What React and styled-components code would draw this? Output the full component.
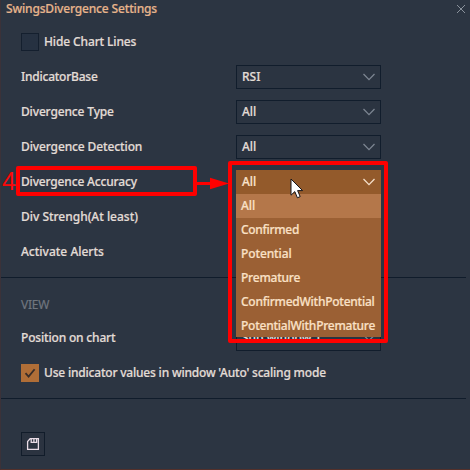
import React from "react";
import styled, { createGlobalStyle } from "styled-components";

const GlobalStyle = createGlobalStyle`
  * { box-sizing: border-box; }
  body { margin: 0; background: #2c3442; }
`;

const Dialog = styled.div`
  position: relative;
  width: 470px;
  height: 470px;
  overflow: hidden;
  display: flex;
  flex-direction: column;
  background: #2c3542;
  border-left: 1px solid #3b3239;
  border-bottom: 1px solid #54302a;
  font-family: "Noto Sans", "Open Sans", sans-serif;
  font-size: 12px;
  font-weight: 500;
  color: #e2dcd6;
`;

const TitleBar = styled.header`
  display: flex;
  justify-content: space-between;
  align-items: center;
  height: 18px;
  padding: 0 4px 0 5px;
  color: #e6b48c;
`;

const Text = styled.span`
  white-space: nowrap;
  line-height: 16px;
  letter-spacing: ${(p) => p.$track || 0}px;
  -webkit-text-stroke: 0.2px currentColor;
`;

const Section = styled.section`
  display: flex;
  flex-direction: column;
  height: ${(p) => p.$height}px;
  padding: ${(p) => p.$top}px 0 0 20px;
  margin-right: 4px;
  border-bottom: 1px solid ${(p) => (p.$last ? "transparent" : "#101c2b")};
`;

const Row = styled.div`
  display: grid;
  grid-template-columns: 215px 145px;
  align-items: center;
  height: ${(p) => p.$height || 35}px;
  margin-bottom: ${(p) => p.$gap || 0}px;
`;

const CheckRow = styled.label`
  display: flex;
  align-items: center;
  gap: 5px;
  height: 18px;
  margin-bottom: ${(p) => p.$gap || 0}px;
`;

const CheckBox = styled.span`
  display: flex;
  align-items: center;
  justify-content: center;
  width: 18px;
  height: 18px;
  background: ${(p) => (p.$checked ? "#b06e37" : "#263141")};
  border: 1px solid ${(p) => (p.$checked ? "#b06e37" : "#141f2e")};
`;

const Select = styled.div`
  display: flex;
  align-items: center;
  justify-content: space-between;
  height: ${(p) => p.$height || 24}px;
  padding: 0 4px 0 5px;
  border: 1px solid ${(p) => (p.$open ? "#935a2b" : "#111d2c")};
  background: ${(p) => (p.$open ? "#935a2b" : "#2b3441")};
  color: ${(p) => (p.$open ? "#fae3cc" : "#e2dcd6")};
  stroke: ${(p) => (p.$open ? "#f5dfca" : "#7c8591")};
`;

const Heading = styled.h2`
  margin: 0 0 12px;
  height: 16px;
  font-size: 12px;
  line-height: 16px;
  font-weight: 400;
  color: #70767f;
`;

const SaveButton = styled.button`
  display: flex;
  align-items: center;
  justify-content: center;
  width: 24px;
  height: 24px;
  padding: 0;
  border: 1px solid #111c2a;
  background: #2b3340;
`;

const Menu = styled.ul`
  position: absolute;
  left: 235px;
  top: 194px;
  width: 145px;
  height: 143px;
  margin: 0;
  padding: 0;
  overflow: hidden;
  list-style: none;
  background: #9b6034;
  color: #fae0c6;
`;

const Option = styled.li`
  display: flex;
  align-items: center;
  height: 24px;
  padding-left: 5px;
  background: ${(p) => (p.$active ? "#b4774a" : "transparent")};

  &:last-child {
    height: 23px;
  }
`;

const Highlight = styled.div`
  position: absolute;
  left: ${(p) => p.$x}px;
  top: ${(p) => p.$y}px;
  width: ${(p) => p.$w}px;
  height: ${(p) => p.$h}px;
  border: 4px solid #fe0000;
  border-radius: 2px;
`;

const StepNumber = styled.span`
  position: absolute;
  left: 1px;
  top: 166px;
  font: 400 25px/30px "Liberation Sans", sans-serif;
  color: #fb0809;
`;

const Overlay = styled.svg`
  position: absolute;
  left: ${(p) => p.$x}px;
  top: ${(p) => p.$y}px;
`;

const Chevron = () => (
  <svg width="14" height="10" viewBox="0 0 14 10" fill="none" strokeWidth="1.3">
    <path d="M1.5 2 L7 7.6 L12.5 2" />
  </svg>
);

const Field = ({ label, track, value, open }) => (
  <Row>
    <Text $track={track}>{label}</Text>
    {value && (
      <Select $open={open}>
        <Text>{value}</Text>
        <Chevron />
      </Select>
    )}
  </Row>
);

const options = [
  { name: "All", track: 0 },
  { name: "Confirmed", track: -0.3 },
  { name: "Potential", track: -0.12 },
  { name: "Premature", track: -0.22 },
  { name: "ConfirmedWithPotential", track: -0.25 },
  { name: "PotentialWithPremature", track: -0.24 },
];

export default function App() {
  return (
    <>
      <GlobalStyle />
      <Dialog>
        <TitleBar>
          <Text $track={-0.16}>SwingsDivergence Settings</Text>
          <svg width="10" height="10" viewBox="0 0 10 10" stroke="#8a929c" fill="none">
            <path d="M1 1 L9 9 M9 1 L1 9" />
          </svg>
        </TitleBar>
        <Section $height={260} $top={15}>
          <CheckRow $gap={8}>
            <CheckBox />
            <Text $track={-0.13}>Hide Chart Lines</Text>
          </CheckRow>
          <Field label="IndicatorBase" track={-0.24} value="RSI" />
          <Field label="Divergence Type" track={-0.15} value="All" />
          <Field label="Divergence Detection" track={-0.12} value="All" />
          <Field label="Divergence Accuracy" track={-0.17} value="All" open />
          <Field label="Div Strengh(At least)" track={-0.02} />
          <Field label="Activate Alerts" />
        </Section>
        <Section $height={121} $top={19}>
          <Heading>
            <Text $track={-0.2}>VIEW</Text>
          </Heading>
          <Row $height={26} $gap={13}>
            <Text $track={-0.18}>Position on chart</Text>
            <Select $height={25}>
              <Text>Sub window 1</Text>
              <Chevron />
            </Select>
          </Row>
          <CheckRow>
            <CheckBox $checked>
              <svg width="12" height="12" viewBox="0 0 12 12" fill="none" stroke="#3a2d28" strokeWidth="1.8">
                <path d="M1.5 6.2 L4.6 9.6 L10.6 2.2" />
              </svg>
            </CheckBox>
            <Text $track={-0.2}>Use indicator values in window 'Auto' scaling mode</Text>
          </CheckRow>
        </Section>
        <Section $height={70} $top={33} $last>
          <SaveButton aria-label="Save">
            <svg width="14" height="14" viewBox="0 0 14 14" fill="none" stroke="#e9dce6" strokeWidth="1.3">
              <path d="M4.2 1.6 H12.4 V12.4 H1.6 V4.6 Z M5.2 1.6 V5.4 H10.6 V1.6 M7.9 1.6 V5" />
            </svg>
          </SaveButton>
        </Section>

        <Menu>
          {options.map((o, i) => (
            <Option key={o.name} $active={i === 0}>
              <Text $track={o.track}>{o.name}</Text>
            </Option>
          ))}
        </Menu>

        <StepNumber>4</StepNumber>
        <Highlight $x={15} $y={166} $w={181} $h={30} />
        <Highlight $x={227} $y={161} $w={160} $h={182} />
        <Overlay $x={195} $y={177} width="34" height="14" viewBox="0 0 34 14">
          <path d="M0 6.5 H16" stroke="#fe0000" strokeWidth="3" />
          <path d="M14 0.8 L33 6.5 L14 12.2 Z" fill="#fe0000" />
        </Overlay>
        <Overlay $x={289} $y={178} width="14" height="22" viewBox="0 0 14 22">
          <path
            d="M1 1 V17.2 L4.8 13.6 L7.4 19.8 L10.2 18.6 L7.6 12.6 H12.6 Z"
            fill="#fff"
            stroke="#15151a"
            strokeWidth="1"
          />
        </Overlay>
      </Dialog>
    </>
  );
}
